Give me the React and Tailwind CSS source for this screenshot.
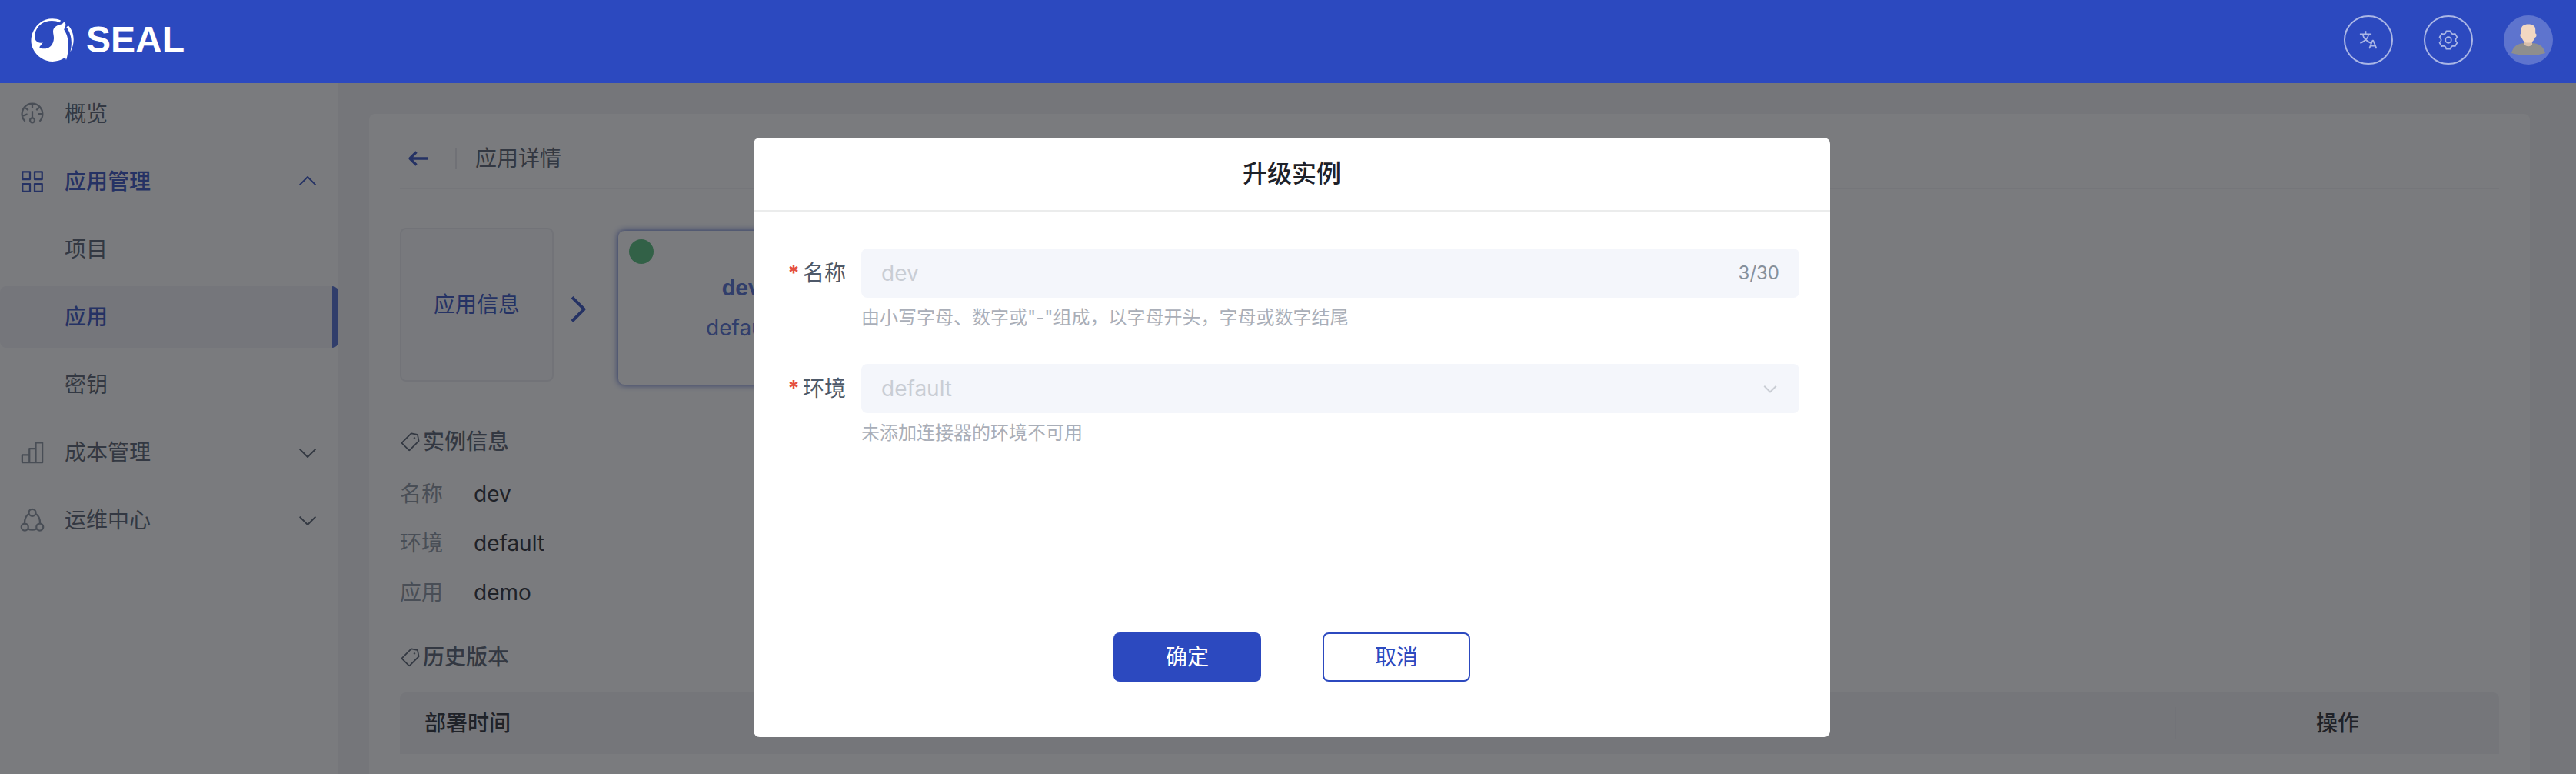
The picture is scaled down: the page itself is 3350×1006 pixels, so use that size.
import React from "react";

function Icon({ d, className, strokeWidth = 4, children }) {
  return (
    <svg
      viewBox="0 0 48 48"
      fill="none"
      stroke="currentColor"
      strokeWidth={strokeWidth}
      strokeLinejoin="round"
      className={className}
      aria-hidden="true"
    >
      {d && <path d={d} />}
      {children}
    </svg>
  );
}

// Gear outline: six lobes, each described by polar points around (24, 24).
function gearOutline() {
  const lobe = [
    [17.5, -19],
    [20.5, -13],
    [20.5, 13],
    [17.5, 19],
    [16, 30],
  ];
  const points = [];
  for (let k = 0; k < 6; k += 1) {
    for (const [r, offset] of lobe) {
      const a = ((k * 60 - 90 + offset) * Math.PI) / 180;
      points.push(`${(24 + r * Math.cos(a)).toFixed(2)} ${(24 + r * Math.sin(a)).toFixed(2)}`);
    }
  }
  return `M${points.join("L")}Z`;
}

const paths = {
  dashboard:
    "M41.808 24c.118 4.63-1.486 9.333-5.21 13m5.21-13h-8.309m8.309 0c-.112-4.38-1.767-8.694-4.627-12M24 6c5.531 0 10.07 2.404 13.18 6M24 6c-5.724 0-10.384 2.574-13.5 6.38M24 6v7.5M37.18 12 31 17.5m-20.5-5.12L17 17.5m-6.5-5.12C6.99 16.662 5.44 22.508 6.53 28m4.872 9c-2.65-2.609-4.226-5.742-4.873-9m0 0 8.97-3.5M24 31a4 4 0 1 0 0 8 4 4 0 0 0 0-8Zm0 0V19",
  apps: "M7 7h13v13H7zM28 7h13v13H28zM7 28h13v13H7zM28 28h13v13H28z",
  bars: "M6.500 41.500h35v-34.500h-11.500v34.500M30 17.500h-11v24M19 28.500H6.500v13",
  down: "M39.600 17.443 24.043 33 8.487 17.443",
  up: "M39.600 30.557 24.043 15 8.487 30.557",
  right: "m16 39.513 15.556-15.557L16 8.400",
  left: "M20.272 11.270 7.544 23.998l12.728 12.728M43 24H8.705",
  language:
    "m42 43-2.385-6M26 43l2.384-6m11.231 0-.795-2-4.180-10h-1.280l-4.181 10-.795 2m11.231 0h-11.230M18 4v7M5 11h26M11 11s1.889 7.826 6.611 12.174C22.333 27.522 30 31 30 31m-5-20s-1.889 7.826-6.611 12.174C13.667 27.522 6 31 6 31",
  settings: gearOutline(),
  tag: "M24.835 6.035a1 1 0 0 1 .903-.273l12.964 2.592a1 1 0 0 1 .784.785l2.593 12.963a1 1 0 0 1-.274.904L21.678 43.133a1 1 0 0 1-1.415 0L4.708 27.577a1 1 0 0 1 0-1.414L24.835 6.035Z",
};

function SealLogo() {
  return (
    <svg viewBox="0 0 56 56" className="size-14" aria-hidden="true">
      <path
        d="M39 2.600C31 -1.200 20 -0.600 12.500 5.200C1.500 13.500 -2.800 28.500 3.200 40C9 52 23 58.800 36 54.800C39.500 53.800 42.500 52.300 44.800 50.500L46 54C47 51 47.700 48 48.200 44.500C49.800 32 48.500 22 43.200 14.500L45.200 9.500C45.600 7 45 5 43.500 4.900C42.300 4.900 41.500 6 41 7.200C35 8.500 30.500 10.500 29.200 15C28.500 19 30.200 22 30 26C29.600 33 25.500 38.600 19.500 39.200C15.500 39.600 12.500 38.800 11.200 37.200L15.800 31.200C12 32.500 8.600 31.200 6.300 28.200C3.200 22 6.500 12.500 13.500 7.200C21 2.200 30.500 2 37.800 5.200Z"
        fill="#fff"
      />
      <path
        d="M48.800 9.200C56.500 17 58 31 52 42.500L51.500 43C54.300 32 53 19.500 46.400 11.500Z"
        fill="#fff"
      />
    </svg>
  );
}

function Avatar() {
  return (
    <svg viewBox="0 0 64 64" className="size-16" aria-hidden="true">
      <circle cx="32" cy="32" r="32" fill="#fff" fillOpacity="0.24" />
      <path d="M10 49C12.500 40 18 36.500 27 36H37C46 36.500 51.500 40 54 49C41 53 23 53 10 49Z" fill="#8e8e8e" />
      <path d="M27 32H37V37.500C36 41 28 41 27 37.500Z" fill="#d9bfab" />
      <path
        d="M22.800 18.500C22.800 13.500 26.500 11.500 32 11.500C37.500 11.500 41.200 13.500 41.200 18.500V23.500C43 23.300 43.300 28 40.800 28.800C39.500 32 37 35.300 34.500 35.600H29.500C27 35.300 24.500 32 23.200 28.800C20.700 28 21 23.300 22.800 23.500Z"
        fill="#f3d8c2"
      />
    </svg>
  );
}

function Header() {
  const round =
    "flex size-16 items-center justify-center rounded-full border-2 border-white/60 text-white/60";
  return (
    <header className="flex h-27 shrink-0 items-center justify-between bg-[#2c49bf] pr-[30px] pl-10">
      <div className="flex items-center gap-4 pb-1">
        <SealLogo />
        <span className="font-['Liberation_Sans',sans-serif] text-5xl font-bold text-white">SEAL</span>
      </div>
      <div className="flex items-center gap-10 pb-1">
        <button className={round} aria-label="语言">
          <Icon d={paths.language} strokeWidth={3} className="size-7" />
        </button>
        <button className={round} aria-label="设置">
          <Icon d={paths.settings} strokeWidth={3} className="size-7">
            <circle cx="24" cy="24" r="6.500" />
          </Icon>
        </button>
        <button aria-label="用户">
          <Avatar />
        </button>
      </div>
    </header>
  );
}

function NavItem({ icon, label, tone = "text-[#4e5969]", iconTone = "text-[#86909c]", chevron, active }) {
  return (
    <li>
      <a
        href="#"
        className={
          "flex h-20 items-center pr-6 pl-6 " +
          tone +
          (active ? " rounded-lg border-r-8 border-[#4a68d0] bg-[#f2f3f8] font-medium" : "")
        }
      >
        <span className={"w-15 " + iconTone}>{icon}</span>
        <span className="grow">{label}</span>
        {chevron && <Icon d={paths[chevron]} strokeWidth={3} className="size-8" />}
      </a>
    </li>
  );
}

function Sidebar() {
  return (
    <nav className="w-110 shrink-0 bg-white">
      <ul className="flex flex-col gap-2">
        <NavItem icon={<Icon d={paths.dashboard} strokeWidth={3} className="size-9" />} label="概览" />
        <NavItem
          icon={<Icon d={paths.apps} strokeWidth={3} className="size-9" />}
          label="应用管理"
          tone="text-[#2c49bf] font-medium"
          iconTone="text-[#2c49bf]"
          chevron="up"
        />
        <NavItem label="项目" />
        <NavItem label="应用" tone="text-[#2c49bf]" active />
        <NavItem label="密钥" />
        <NavItem
          icon={<Icon d={paths.bars} strokeWidth={3} className="size-9" />}
          label="成本管理"
          chevron="down"
        />
        <NavItem
          icon={
            <Icon strokeWidth={3} className="size-9">
              <circle cx="24" cy="11" r="6" />
              <circle cx="11" cy="36" r="6" />
              <circle cx="37" cy="36" r="6" />
              <path d="M18.500 13C13 16 10.500 21 10.500 30M29.500 13C35 16 37.500 21 37.500 30M16.500 39C20.500 41.500 27.500 41.500 31.500 39" />
            </Icon>
          }
          label="运维中心"
          chevron="down"
        />
      </ul>
    </nav>
  );
}

function SectionTitle({ children }) {
  return (
    <h2 className="flex items-center gap-0.5 font-medium text-[#4e5969]">
      <Icon d={paths.tag} strokeWidth={3} className="size-7">
        <circle cx="32.500" cy="16" r="1.500" fill="currentColor" strokeWidth="1" />
      </Icon>
      {children}
    </h2>
  );
}

function Detail() {
  const rows = [
    ["名称", "dev"],
    ["环境", "default"],
    ["应用", "demo"],
  ];
  return (
    <main className="flex grow flex-col bg-[#f2f3f5] pt-10 pr-15 pl-10">
      <section className="grow rounded-t-lg bg-white px-10 pt-5">
        <div className="flex h-[78px] items-center border-b-2 border-[#f2f3f5]">
          <button className="px-2 text-[#2c49bf]" aria-label="返回">
            <Icon d={paths.left} className="size-8" strokeWidth={5} />
          </button>
          <span className="ml-6 h-7 w-0.5 bg-[#e5e6eb]" />
          <h1 className="ml-6 text-[#4e5969]">应用详情</h1>
        </div>

        <div className="mt-[50px] flex items-start">
          <button className="size-50 rounded-lg border-2 border-[#ebecf0] bg-[#fafbfd] text-[#2c49bf]">
            应用信息
          </button>
          <Icon d={paths.right} strokeWidth={4} className="mt-[82px] ml-2 size-12 text-[#2c49bf]" />
          <button className="relative mt-1 ml-7 flex h-50 w-80 flex-col items-center justify-center gap-2.5 rounded-lg text-[#4a68d0] shadow-[0_0_8px_0_#2c49bf]">
            <span className="absolute top-[11px] left-3.5 size-8 rounded-full bg-[#4dbd75]" />
            <strong className="font-bold">dev</strong>
            <span>default</span>
          </button>
        </div>

        <div className="mt-[53px]">
          <SectionTitle>实例信息</SectionTitle>
          <dl className="mt-[26px] flex flex-col gap-[22px]">
            {rows.map(([k, v]) => (
              <div key={k} className="flex">
                <dt className="w-24 text-[#86909c]">{k}</dt>
                <dd className="text-[#1d2129]">{v}</dd>
              </div>
            ))}
          </dl>
        </div>

        <div className="mt-[42px]">
          <SectionTitle>历史版本</SectionTitle>
          <table className="mt-[25px] w-full table-fixed">
            <thead>
              <tr className="h-20 text-[#1d2129]">
                <th className="rounded-tl-lg bg-[#f2f3f5] px-8 text-left font-medium">部署时间</th>
                <th className="w-[422px] rounded-tr-lg bg-[#f2f3f5] font-medium">
                  <div className="border-l-2 border-[#ebecf0]">操作</div>
                </th>
              </tr>
            </thead>
          </table>
        </div>
      </section>
    </main>
  );
}

function Field({ id, label, hint, children }) {
  return (
    <div className="flex">
      <label htmlFor={id} className="flex h-16 w-30 shrink-0 items-center justify-end gap-1 pr-5 text-[#4e5969]">
        <span className="font-bold text-[#e5503f]">*</span>
        {label}
      </label>
      <div className="grow">
        <div className="relative flex h-16 items-center rounded-lg bg-[#f4f6fb]">{children}</div>
        <p className="mt-2 text-2xl leading-9 text-[#a9aeb8]">{hint}</p>
      </div>
    </div>
  );
}

function UpgradeDialog() {
  return (
    <div className="fixed inset-x-0 top-27 bottom-0 flex items-start justify-center bg-[#212328]/60 pt-[71px] pl-2.5">
      <div role="dialog" aria-labelledby="dialog-title" className="w-full max-w-350 rounded-lg bg-white pb-18">
        <h2
          id="dialog-title"
          className="flex h-24 items-center justify-center border-b-2 border-[#ebecec] text-[32px] font-medium text-[#1d2129]"
        >
          升级实例
        </h2>
        <form className="pt-12 pr-10 pl-5" onSubmit={(e) => e.preventDefault()}>
          <div className="flex min-h-[499px] flex-col gap-[42px]">
            <Field id="name" label="名称" hint={'由小写字母、数字或"-"组成，以字母开头，字母或数字结尾'}>
              <input
                id="name"
                disabled
                defaultValue="dev"
                className="h-full min-w-0 grow bg-transparent px-[26px] text-[#c9cdd4]"
              />
              <span className="pr-[26px] text-2xl text-[#86909c]">3/30</span>
            </Field>
            <Field id="env" label="环境" hint="未添加连接器的环境不可用">
              <select
                id="env"
                disabled
                defaultValue="default"
                className="h-full w-full appearance-none bg-transparent px-[26px] text-[#c9cdd4] opacity-100"
              >
                <option value="default">default</option>
              </select>
              <Icon
                d={paths.down}
                className="pointer-events-none absolute right-[26px] size-6 text-[#c9cdd4]"
              />
            </Field>
          </div>
          <div className="flex justify-center gap-20 pl-5">
            <button type="submit" className="h-16 w-48 rounded-lg bg-[#2c49bf] text-white">
              确定
            </button>
            <button type="button" className="h-16 w-48 rounded-lg border-2 border-[#2c49bf] text-[#2c49bf]">
              取消
            </button>
          </div>
        </form>
      </div>
    </div>
  );
}

export default function App() {
  return (
    <div className="flex h-screen flex-col overflow-hidden font-['Inter','Noto_Sans_CJK_SC',sans-serif] text-[28px] leading-[42px]">
      <Header />
      <div className="flex grow">
        <Sidebar />
        <Detail />
      </div>
      <UpgradeDialog />
    </div>
  );
}
